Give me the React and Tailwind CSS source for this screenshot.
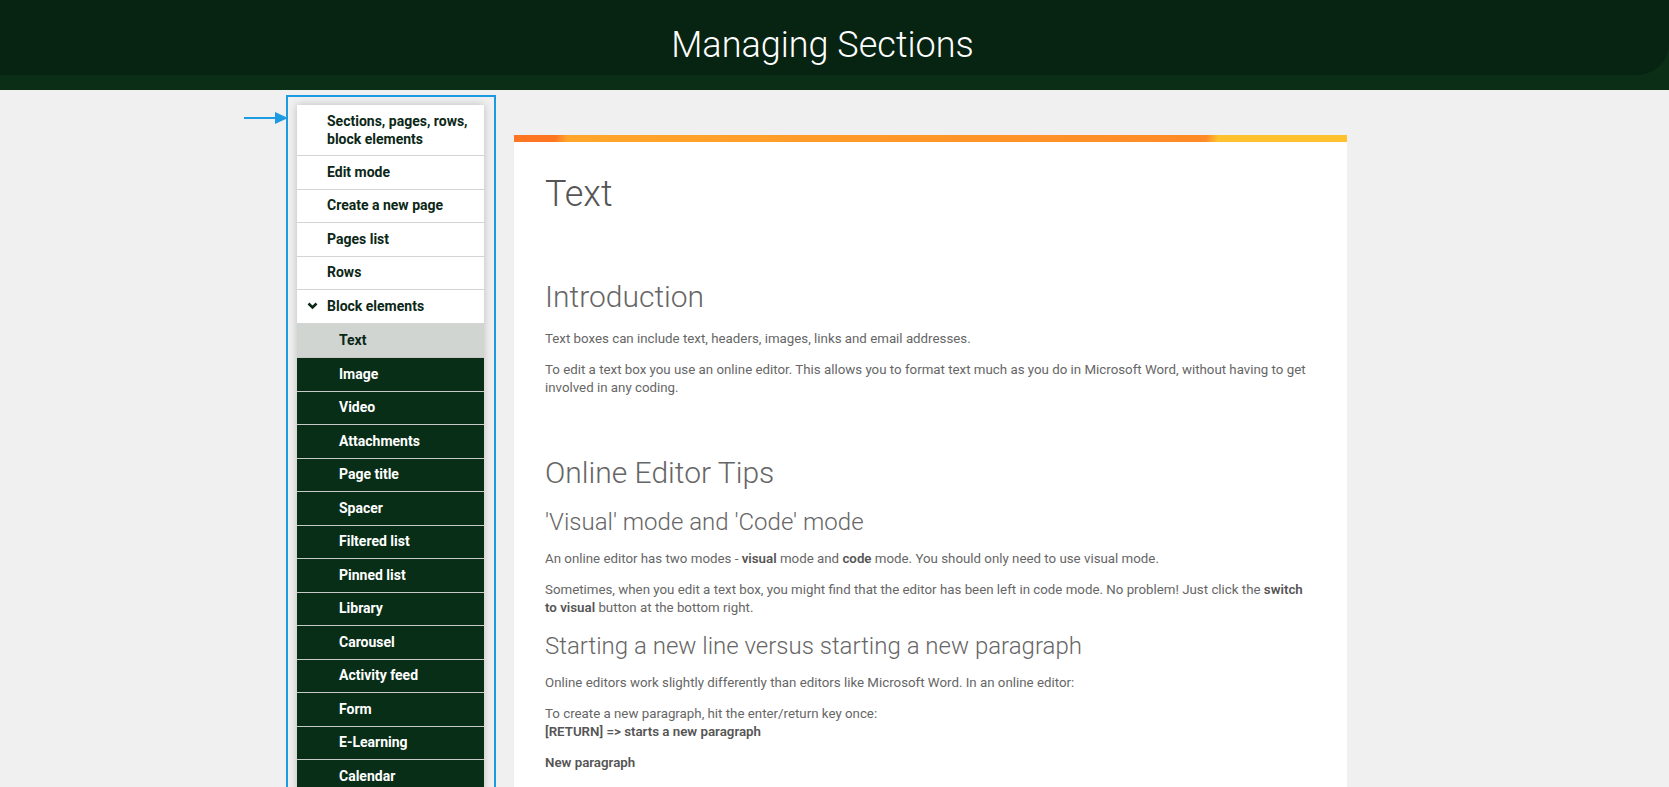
import React from "react";

const topItems = [
  "Edit mode",
  "Create a new page",
  "Pages list",
  "Rows",
];

const blockItems = [
  "Image",
  "Video",
  "Attachments",
  "Page title",
  "Spacer",
  "Filtered list",
  "Pinned list",
  "Library",
  "Carousel",
  "Activity feed",
  "Form",
  "E-Learning",
  "Calendar",
];

function Arrow() {
  return (
    <svg width="44" height="14" viewBox="0 0 44 14" className="absolute left-[-44px] top-[14px]">
      <line x1="0" y1="7" x2="32" y2="7" stroke="#1d9be2" strokeWidth="2" />
      <polygon points="31,1 44,7 31,13" fill="#1d9be2" />
    </svg>
  );
}

function Sidebar() {
  return (
    <div className="relative w-[210px] shrink-0 border-2 border-[#1d9be2] p-[9px] pr-[10px] pt-[8px]">
      <Arrow />
      <ul className="bg-white shadow-[0_0_8px_rgba(0,0,0,0.22)] text-[14px] font-bold">
        <li className="border-b border-[#d4d4d4] pl-[30px] pr-2 pt-[8px] pb-[7px] leading-[17.5px] text-[#0b2716]">
          Sections, pages, rows, block elements
        </li>
        {topItems.map((t) => (
          <li key={t} className="h-[33.5px] border-b border-[#d4d4d4] pl-[30px] flex items-center text-[#0b2716]">
            {t}
          </li>
        ))}
        <li className="h-[33.5px] border-b border-[#d4d4d4] pl-[10px] flex items-center gap-[9px] text-[#0b2716]">
          <svg width="11" height="8" viewBox="0 0 11 8">
            <polyline points="1.5,1.5 5.5,5.5 9.5,1.5" fill="none" stroke="#0b2716" strokeWidth="2.6" />
          </svg>
          Block elements
        </li>
        <li className="h-[33.5px] bg-[#d0d5d1] pl-[42px] flex items-center text-[#0b2716]">
          Text
        </li>
        {blockItems.map((t) => (
          <li key={t} className="h-[33.5px] border-t border-[#c9c9c9] bg-[#082e18] pl-[42px] flex items-center text-white">
            {t}
          </li>
        ))}
      </ul>
    </div>
  );
}

function Article() {
  return (
    <div className="mt-[40px] w-[833px] shrink-0">
      <div className="h-[7px] bg-[linear-gradient(100deg,#ff7622_0%,#ff7622_5%,#ffa62a_6.5%,#ff8a27_83%,#ffc22e_84.5%,#ffc22e_100%)]" />
      <div className="bg-white px-[31px] pt-[31px] pb-16 text-[#666] text-[13.3px] leading-[18px]">
        <h1 className="text-[36px] leading-[43px] font-light text-[#555]">Text</h1>
        <h2 className="mt-[63px] text-[30px] leading-[36px] font-light">Introduction</h2>
        <p className="mt-[15px]">Text boxes can include text, headers, images, links and email addresses.</p>
        <p className="mt-[13px]">
          To edit a text box you use an online editor. This allows you to format text much as you do in Microsoft Word, without having to get involved in any coding.
        </p>
        <h2 className="mt-[58px] text-[30px] leading-[36px] font-light">Online Editor Tips</h2>
        <h3 className="mt-[17px] text-[24px] leading-[29px] font-light">'Visual' mode and 'Code' mode</h3>
        <p className="mt-[13px]">
          An online editor has two modes - <b className="font-semibold text-[#555]">visual</b> mode and <b className="font-semibold text-[#555]">code</b> mode. You should only need to use visual mode.
        </p>
        <p className="mt-[13px]">
          Sometimes, when you edit a text box, you might find that the editor has been left in code mode. No problem! Just click the <b className="font-semibold text-[#555]">switch to visual</b> button at the bottom right.
        </p>
        <h3 className="mt-[15px] text-[24px] leading-[29px] font-light">Starting a new line versus starting a new paragraph</h3>
        <p className="mt-[13px]">Online editors work slightly differently than editors like Microsoft Word. In an online editor:</p>
        <p className="mt-[13px]">
          To create a new paragraph, hit the enter/return key once:
          <br />
          <b className="font-semibold text-[#555]">[RETURN] =&gt; starts a new paragraph</b>
        </p>
        <p className="mt-[13px] font-semibold text-[#555]">New paragraph</p>
      </div>
    </div>
  );
}

export default function App() {
  return (
    <div className="h-[787px] overflow-hidden bg-[#f0f0f0] font-['Roboto',sans-serif]">
      {/* header */}
      <header className="h-[90px] bg-[#0a2e16]">
        <div className="h-[75px] bg-[#072312] rounded-br-[32px] flex items-center justify-center pr-[24px] pt-[16px]">
          <h1 className="text-[36px] font-light text-white leading-[43px]">Managing Sections</h1>
        </div>
      </header>

      <div className="flex items-start gap-[18px] pl-[286px] pt-[5px]">
        <Sidebar />
        <Article />
      </div>
    </div>
  );
}
